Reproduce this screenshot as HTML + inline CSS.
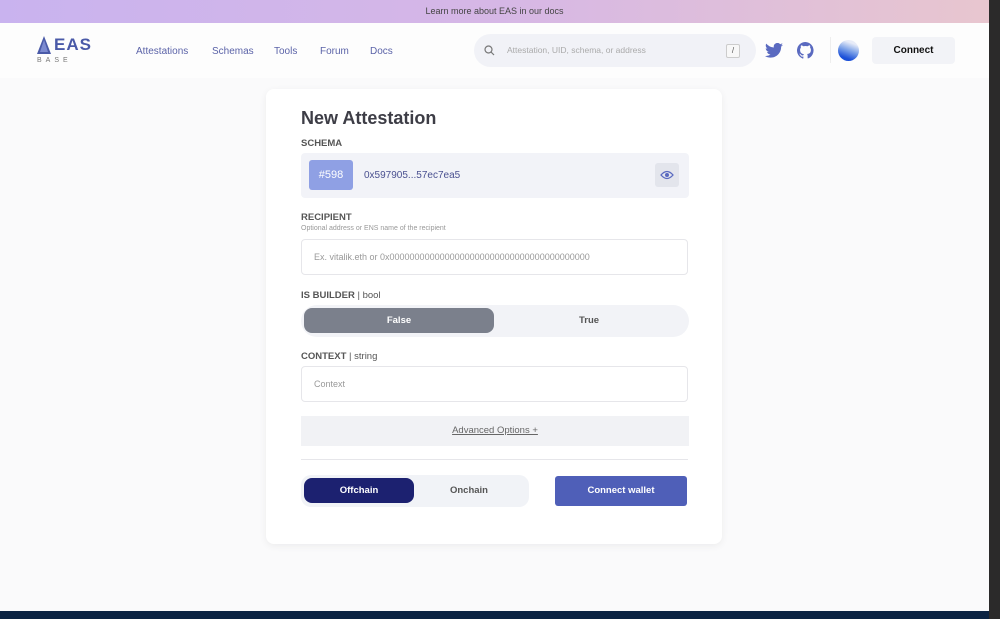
<!DOCTYPE html>
<html><head><meta charset="utf-8"><style>
*{box-sizing:border-box;margin:0;padding:0}
body{width:1000px;height:619px;overflow:hidden;background:#fafafb;font-family:"Liberation Sans",sans-serif;position:relative}
.top{position:absolute;left:0;top:0;width:989px;height:23px;background:linear-gradient(90deg,#c9b3ef,#d6b7e6 50%,#e8c6cf);font-size:9px;color:#444;text-align:center;line-height:23px}
.sb{position:absolute;right:0;top:0;width:11px;height:619px;background:#2b2a2a}
.nav{position:absolute;left:0;top:23px;width:989px;height:55px;background:#fdfdfd}
.nav a{position:absolute;top:23px;font-size:10px;color:#5b63a8}
.search{position:absolute;left:474px;top:34px;width:282px;height:33px;border-radius:17px;background:#f1f2f7}
.card{position:absolute;left:266px;top:89px;width:456px;height:455px;background:#fff;border-radius:8px;box-shadow:0 2px 8px rgba(0,0,0,.06)}
.lbl{position:absolute;left:35px;font-size:9.5px;color:#555;font-weight:bold}
.lbl span{font-weight:normal}
.inp{position:absolute;left:35px;width:387px;height:36px;border:1px solid #e6e6ea;border-radius:4px;font-size:9px;color:#999;padding-left:12px;line-height:34px}
</style></head><body>
<div class="top">Learn more about EAS in our docs</div>
<div class="nav">
 <svg style="position:absolute;left:37px;top:13px" width="14" height="18"><path d="M7 0L14 18H0Z" fill="#4a5aa8"/><path d="M7 4L11 16H3Z" fill="#7c8ad0"/></svg>
 <div style="position:absolute;left:54px;top:12px;font-size:17px;font-weight:bold;color:#4a5aa8;letter-spacing:1px">EAS</div>
 <div style="position:absolute;left:37px;top:34px;font-size:7px;color:#777;letter-spacing:4px">BASE</div>
 <a style="left:136px">Attestations</a><a style="left:212px">Schemas</a><a style="left:274px">Tools</a><a style="left:320px">Forum</a><a style="left:370px">Docs</a>
 <svg style="position:absolute;left:830px;top:14px" width="1" height="26"><rect width="1" height="26" fill="#eee"/></svg>
 <svg style="position:absolute;left:765px;top:20px" width="18" height="15" viewBox="0 0 24 20"><path d="M24 2.4a10 10 0 0 1-2.8.8A5 5 0 0 0 23.3.4a10 10 0 0 1-3.1 1.2A4.9 4.9 0 0 0 11.8 6 14 14 0 0 1 1.7.9a4.9 4.9 0 0 0 1.5 6.6 4.9 4.9 0 0 1-2.2-.6 4.9 4.9 0 0 0 3.9 4.9 5 5 0 0 1-2.2.1 4.9 4.9 0 0 0 4.6 3.4A9.9 9.9 0 0 1 0 17.3 14 14 0 0 0 7.5 19.5c9 0 14-7.5 14-14v-.6A10 10 0 0 0 24 2.4z" fill="#5a6ac0"/></svg>
 <svg style="position:absolute;left:797px;top:19px" width="17" height="17" viewBox="0 0 16 16"><path fill="#5a6ac0" d="M8 0a8 8 0 0 0-2.5 15.6c.4 0 .5-.2.5-.4v-1.5c-2.2.5-2.7-1-2.7-1-.4-.9-.9-1.2-.9-1.2-.7-.5.1-.5.1-.5.8.1 1.2.8 1.2.8.7 1.300 1.9.9 2.3.7.1-.5.3-.9.5-1.1-1.8-.2-3.6-.9-3.6-4 0-.9.3-1.6.8-2.1-.1-.2-.4-1 .1-2.1 0 0 .7-.2 2.200.8a7.5 7.5 0 0 1 4 0c1.5-1 2.2-.8 2.2-.8.4 1.1.2 1.9.1 2.1.5.6.8 1.3.8 2.1 0 3.1-1.9 3.7-3.6 3.9.3.3.5.8.5 1.5v2.2c0 .2.1.5.6.4A8 8 0 0 0 8 0z"/></svg>
 <div style="position:absolute;left:838px;top:17px;width:21px;height:21px;border-radius:50%;background:linear-gradient(200deg,#e8ecf8 20%,#7aa0e8 50%,#1a4fd8 80%)"></div>
 <div style="position:absolute;left:872px;top:14px;width:83px;height:27px;border-radius:4px;background:#f2f3f7;font-size:10px;font-weight:bold;color:#111;text-align:center;line-height:27px">Connect</div>
</div>
<div class="search">
 <svg style="position:absolute;left:10px;top:11px" width="11" height="11"><circle cx="4.5" cy="4.5" r="3.5" stroke="#777" fill="none" stroke-width="1.2"/><path d="M7 7l3 3" stroke="#777" stroke-width="1.2"/></svg>
 <div style="position:absolute;left:33px;top:11px;font-size:8.5px;color:#aaa">Attestation, UID, schema, or address</div>
 <div style="position:absolute;left:252px;top:10px;width:14px;height:14px;border:1px solid #ccc;border-radius:2px;font-size:8px;color:#555;text-align:center;line-height:12px;background:#f8f8f8">/</div>
</div>
<div class="card">
 <div style="position:absolute;left:35px;top:19px;font-size:18px;font-weight:bold;color:#3d3d46">New Attestation</div>
 <div class="lbl" style="top:49px">SCHEMA</div>
 <div style="position:absolute;left:35px;top:64px;width:388px;height:45px;background:#f2f3f8;border-radius:4px"></div>
 <div style="position:absolute;left:43px;top:71px;width:44px;height:30px;background:#8fa0e4;border-radius:3px;color:#fff;font-size:11px;text-align:center;line-height:30px">#598</div>
 <div style="position:absolute;left:98px;top:81px;font-size:10px;color:#4a5090">0x597905...57ec7ea5</div>
 <div style="position:absolute;left:389px;top:74px;width:24px;height:24px;background:#e3e5ec;border-radius:3px"><svg style="margin:7px 5px" width="14" height="10" viewBox="0 0 14 10"><path d="M1 5Q7-2 13 5Q7 12 1 5Z" fill="none" stroke="#5a6ac0" stroke-width="1.3"/><circle cx="7" cy="5" r="2" fill="#5a6ac0"/></svg></div>
 <div class="lbl" style="top:123px">RECIPIENT</div>
 <div style="position:absolute;left:35px;top:136px;font-size:7px;color:#999">Optional address or ENS name of the recipient</div>
 <div class="inp" style="top:150px">Ex. vitalik.eth or 0x0000000000000000000000000000000000000000</div>
 <div class="lbl" style="top:201px">IS BUILDER <span>| bool</span></div>
 <div style="position:absolute;left:35px;top:216px;width:388px;height:32px;background:#f2f3f7;border-radius:16px"></div>
 <div style="position:absolute;left:38px;top:219px;width:190px;height:25px;background:#7b808c;border-radius:8px;color:#fff;font-size:9.5px;font-weight:bold;text-align:center;line-height:25px">False</div>
 <div style="position:absolute;left:228px;top:219px;width:190px;height:25px;color:#555;font-size:9.5px;font-weight:bold;text-align:center;line-height:25px">True</div>
 <div class="lbl" style="top:262px">CONTEXT <span>| string</span></div>
 <div class="inp" style="top:277px">Context</div>
 <div style="position:absolute;left:35px;top:327px;width:388px;height:30px;background:#f1f2f5;font-size:9.5px;color:#666;text-align:center;line-height:30px;text-decoration:underline">Advanced Options +</div>
 <div style="position:absolute;left:35px;top:370px;width:387px;height:1px;background:#e6e6ea"></div>
 <div style="position:absolute;left:35px;top:386px;width:228px;height:32px;background:#f1f3f7;border-radius:10px"></div>
 <div style="position:absolute;left:38px;top:389px;width:110px;height:25px;background:#1c2170;border-radius:8px;color:#fff;font-size:9.5px;font-weight:bold;text-align:center;line-height:25px">Offchain</div>
 <div style="position:absolute;left:148px;top:389px;width:110px;height:25px;color:#555;font-size:9.5px;font-weight:bold;text-align:center;line-height:25px">Onchain</div>
 <div style="position:absolute;left:289px;top:387px;width:132px;height:30px;background:#4f5fb8;border-radius:3px;color:#fff;font-size:9.5px;font-weight:bold;text-align:center;line-height:30px">Connect wallet</div>
</div>
<div style="position:absolute;left:0;top:611px;width:989px;height:8px;background:#0b2342"></div>
<div class="sb"></div>
</body></html>
